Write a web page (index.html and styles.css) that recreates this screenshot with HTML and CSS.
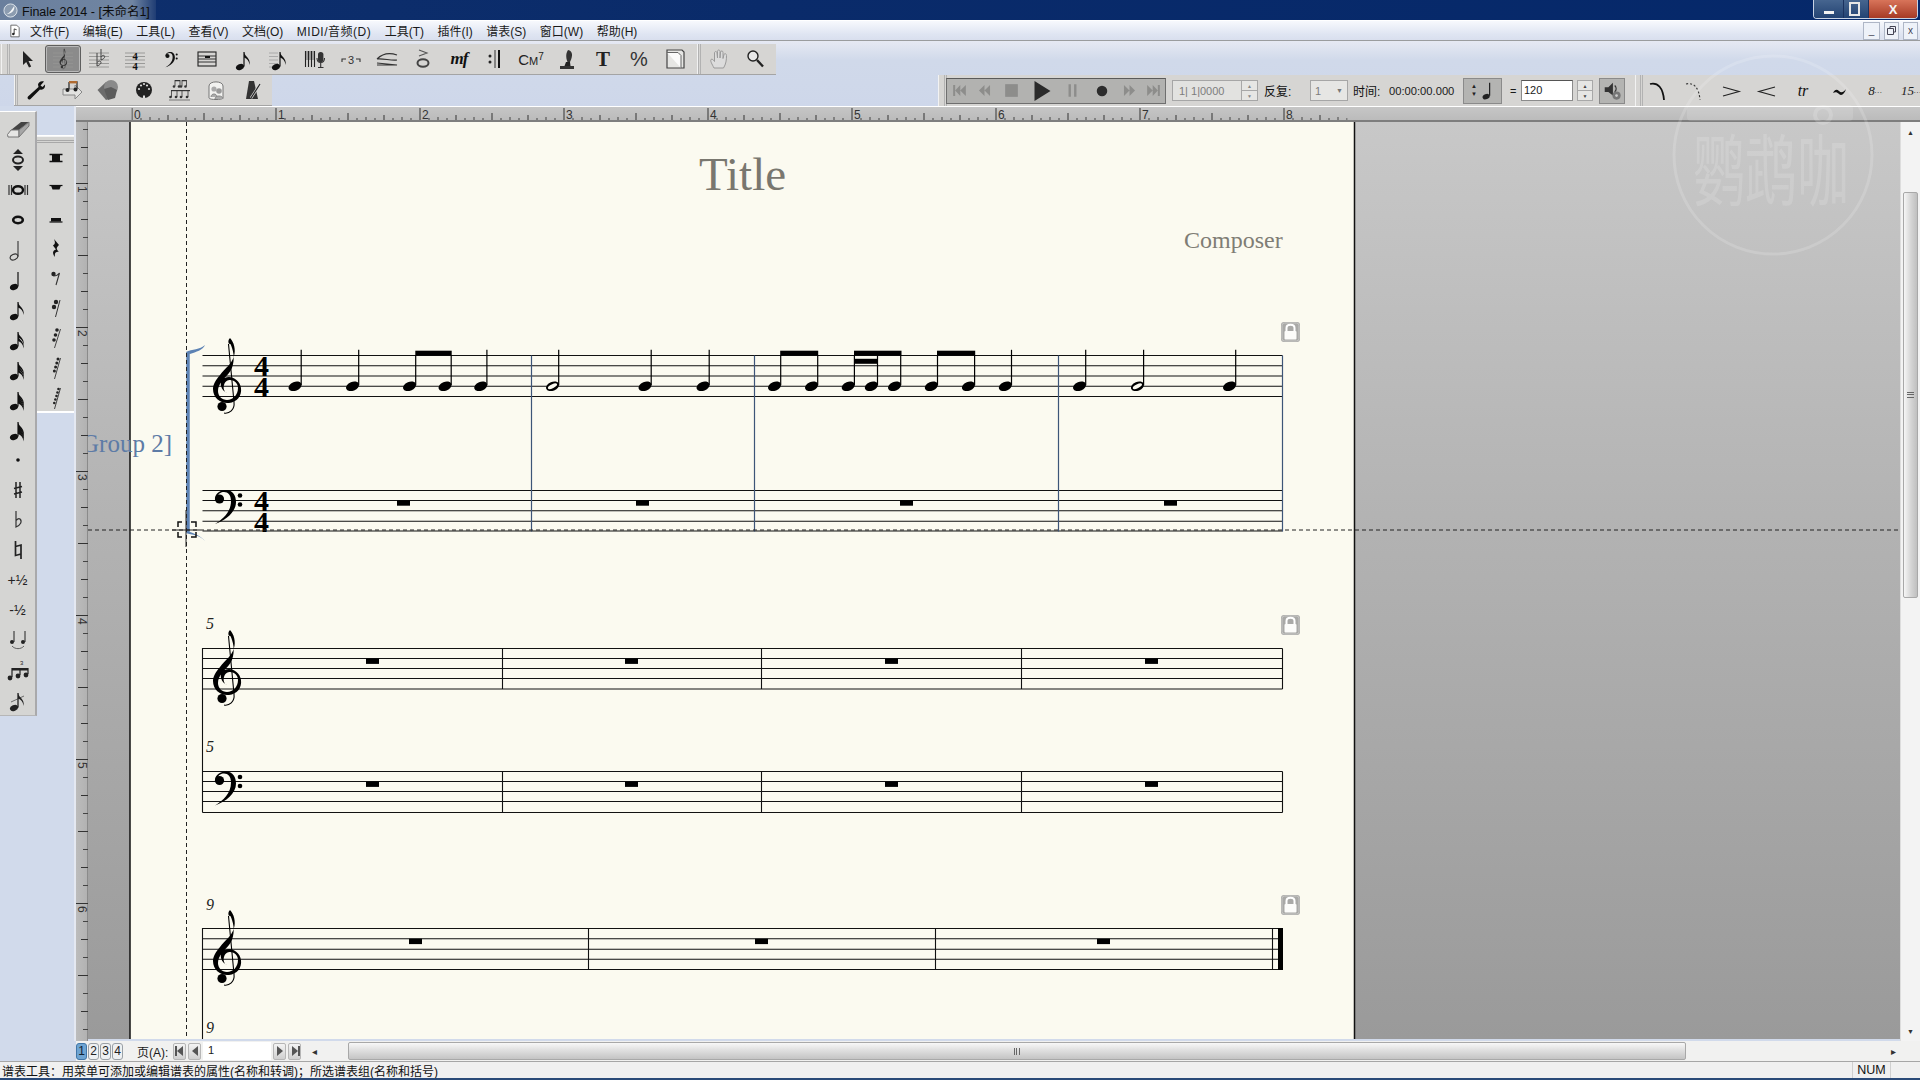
FILE: index.html
```html
<!DOCTYPE html>
<html lang="zh">
<head>
<meta charset="utf-8">
<title>Finale 2014</title>
<link rel="stylesheet" href="styles.css">
</head>
<body>
<svg class="sprite" aria-hidden="true">
<defs>
  <g id="treble">
    <path d="M17 0C21 4 23 12 21 18C19 26 12 30 7 37C3 42 0 46 0 51C0 60 8 66 16 65C24 64 29 58 28 50C27 43 21 39 16 39C10 39 7 44 8 48C9 52 12 54 14 55C11 54 10 50 11 47C12 43 15 42 17 42C22 42 25 46 25 50C25 57 20 62 14 62C9 62 5 58 5 53C5 46 11 41 16 35C21 29 22 18 19 10C18 6 17 5 16 6C15 4 15 2 17 0Z"/>
    <path d="M15.5 6L21 64C22 72 16 76 11 75" fill="none" stroke="#000" stroke-width="1.1"/>
    <circle cx="9" cy="68.5" r="4.6"/>
  </g>
  <g id="bass">
    <path d="M1 9C1 3 7 0 12 0C19 0 22 6 22 12C22 22 12 30 1 34C9 29 17 22 17 11C17 5 14 2 10 2C7 2 4 4 4 6Z"/>
    <circle cx="5.5" cy="9" r="4.6"/>
    <circle cx="26" cy="5.5" r="2.3"/>
    <circle cx="26" cy="14.5" r="2.3"/>
  </g>
  <g id="qn"><ellipse rx="6.8" ry="4.4" transform="rotate(-22)"/><path d="M6.2 -1V-36.5" stroke="#000" stroke-width="1.2"/></g>
  <g id="hn"><ellipse rx="6.8" ry="4.4" transform="rotate(-22)"/><ellipse rx="5" ry="1.9" transform="rotate(-26)" fill="#fbfaf0"/><path d="M6.2 -1V-36.5" stroke="#000" stroke-width="1.2"/></g>
  <g id="stem"><ellipse rx="6.8" ry="4.4" transform="rotate(-22)"/><path d="M6.2 -1V-31" stroke="#000" stroke-width="1.2"/></g>
  <rect id="rest" width="13" height="5.4"/>
  <g id="lock">
    <rect x="0" y="0" width="19" height="20" rx="3" fill="#a9a9a7"/>
    <rect x="1" y="1" width="17" height="18" rx="2.500" fill="none" stroke="#c8c8c6"/>
    <path d="M5.500 9V6C5.500 1.800 13.500 1.800 13.500 6V9" fill="none" stroke="#fff" stroke-width="2"/>
    <rect x="3.500" y="9" width="12" height="8.500" rx="1" fill="#fcfcfa"/>
  </g>

  <g id="n-head"><ellipse cx="8" cy="19" rx="4.2" ry="3" transform="rotate(-22 8 19)"/><path d="M12 18.500V4" stroke="#111" stroke-width="1.200"/></g>
  <path id="n-flag" d="M12 4C13 9 19 10 17.5 17C17 12.5 15 10.5 12 9.5Z"/>
  <g id="n-8"><use href="#n-head"/><use href="#n-flag"/></g>
  <g id="n-16"><use href="#n-head"/><use href="#n-flag"/><use href="#n-flag" y="3.5"/></g>
  <g id="n-32"><use href="#n-head"/><use href="#n-flag"/><use href="#n-flag" y="2.5"/><use href="#n-flag" y="5"/></g>
  <g id="n-64"><use href="#n-head"/><use href="#n-flag"/><use href="#n-flag" y="2"/><use href="#n-flag" y="4"/><use href="#n-flag" y="6"/></g>
  <g id="n-128"><use href="#n-head"/><use href="#n-flag"/><use href="#n-flag" y="1.6"/><use href="#n-flag" y="3.2"/><use href="#n-flag" y="4.8"/><use href="#n-flag" y="6.4"/></g>
  <g id="staffl"><path d="M2 6H22M2 9.5H22M2 13H22M2 16.5H22M2 20H22" stroke="#9a9a98" stroke-width="1" fill="none"/></g>

  <path id="i-arrow" d="M8 4V18L11.2 15L14 20.5L16.2 19.4L13.5 14H18Z" fill="#222"/>
  <g id="i-clefsel"><use href="#staffl" opacity=".6"/><g transform="translate(8.500 1.500) scale(.27)" fill="#333"><use href="#treble"/></g></g>
  <g id="i-key"><use href="#staffl"/><path d="M10 6V19C13 18 15 16 13.500 14.400C12.500 13.600 11 14.400 10 15.500M14 2V13C17 12 18.500 10 17.200 8.600C16.200 8 15 8.600 14 9.800" fill="none" stroke="#444" stroke-width="1"/></g>
  <g id="i-time"><use href="#staffl"/><text class="t-time" x="12" y="12.500">4</text><text class="t-time" x="12" y="22.500">4</text></g>
  <g id="i-bass"><g transform="translate(6 5) scale(.45)" fill="#111"><use href="#bass"/></g></g>
  <g id="i-measure"><rect x="3" y="5" width="18" height="14" fill="none" stroke="#222" stroke-width="1.100"/><path d="M3 9H21M3 12H21M3 15H21" stroke="#333"/><rect x="10" y="9" width="5" height="2" fill="#111"/></g>
  <g id="i-eighth"><use href="#n-8" transform="translate(1 1)" fill="#111"/></g>
  <g id="i-ghost"><path d="M2 6H11M2 9.500H11M2 13H11M2 16.500H11M2 20H11" stroke="#aaa" fill="none"/><use href="#n-8" transform="translate(1 1)" fill="#111"/></g>
  <g id="i-mic"><path d="M2.500 4V20M5.500 4V20M8.500 4V20M11.500 4V20" stroke="#222" stroke-width="1.100"/><path d="M4 4V13M7 4V13M10 4V13" stroke="#666" stroke-width="1"/><rect x="15" y="5" width="5.400" height="10" rx="2.600" fill="#333"/><path d="M14 11C14 17 21.500 17 21.500 11M17.700 16V20M15 20.500H20.500" fill="none" stroke="#333" stroke-width="1.100"/></g>
  <g id="i-tuplet"><path d="M3 15V12H7M17 12H21V15" fill="none" stroke="#333" stroke-width="1.100"/><text class="t-tup" x="12" y="16.500">3</text></g>
  <g id="i-hair"><path d="M2 12C8 6 16 6 22 8M2 12C8 11 16 14 22 13M2 18H22L2 16" fill="none" stroke="#333" stroke-width="1.100"/></g>
  <g id="i-accent"><path d="M8 3L16 6L8 9" fill="none" stroke="#555" stroke-width="1.100"/><ellipse cx="12" cy="16" rx="5.500" ry="3.700" fill="none" stroke="#444" stroke-width="2"/></g>
  <g id="i-repeat"><circle cx="7" cy="9" r="1.500" fill="#222"/><circle cx="7" cy="15" r="1.500" fill="#222"/><path d="M12 3V21" stroke="#333"/><path d="M16 3V21" stroke="#111" stroke-width="2"/></g>
  <g id="i-quill"><path d="M13 3C18 4 18 9 15 15L12.500 15C10.500 10 11 6 13 3Z" fill="#333"/><path d="M11 15H15L15.500 19H9.500Z" fill="#222"/><rect x="5" y="19" width="14" height="3" fill="#333"/></g>
  <g id="i-page"><path d="M4 3H19L21 5V21H4Z" fill="#e6e6e4" stroke="#444" stroke-width="1.200"/><path d="M4 5.500H15L18 8.500V21" fill="#fafafa" stroke="#666"/></g>
  <g id="i-hand"><path d="M7 21C5 17 3 14 4 12.500C5 11.500 6.500 13 7.500 14.500L7.500 6C7.500 4 10 4 10 6L10.500 11V4.500C10.500 2.500 13 2.500 13 4.500V11L13.500 5C14 3.500 16 3.500 16 5.500V11.500L17 7.500C17.500 6 19.500 6.500 19.500 8.500C19.500 13 19 17 16.500 21Z" fill="#dcdcdc" stroke="#9a9a9a"/></g>
  <g id="i-mag"><circle cx="10" cy="9" r="5" fill="#e8e8e8" stroke="#222" stroke-width="1.400"/><path d="M14 13L20 19.500" stroke="#222" stroke-width="2.400"/></g>

  <path id="i-wrench" d="M20 3.500C17 2.500 14.500 4 14 6.500L14.500 9L4 18.500C2.500 20.500 5 22.500 6.500 21L16 11.500C19 12.500 21.500 10 21 6.500L18.500 9L16.500 7.500Z" fill="#111"/>
  <g id="i-musarrow"><path d="M3 11H15V7L22 14L15 21V17H3Z" fill="#e2e2e0" stroke="#888"/><path d="M9 4H17V11M9 4V11" fill="none" stroke="#333" stroke-width="1.300"/><rect x="9" y="3" width="8" height="2.400" fill="#b06a30"/><circle cx="7.500" cy="12" r="2" fill="#222"/><circle cx="15.500" cy="11.500" r="2" fill="#222"/></g>
  <g id="i-shapes"><path d="M1.500 12L10 4L16 9V20L10 22Z" fill="#6c6c6c"/><circle cx="15" cy="9" r="7" fill="#8a8a8a"/><path d="M8 11L15 9L21 12L19 20L12 22Z" fill="#5c5c5c"/></g>
  <g id="i-midi"><circle cx="12" cy="12" r="8" fill="#222"/><circle cx="7" cy="11" r="1.100" fill="#ddd"/><circle cx="9" cy="7.500" r="1.100" fill="#ddd"/><circle cx="15" cy="7.500" r="1.100" fill="#ddd"/><circle cx="17" cy="11" r="1.100" fill="#ddd"/><circle cx="12" cy="6" r="1.100" fill="#ddd"/><rect x="11" y="17.500" width="2" height="2.500" fill="#ddd"/></g>
  <g id="i-notes" fill="#333"><path d="M7 2H12V3.200H7ZM14 2H18.500V3.200H14Z"/><path d="M7 2V8M12 2V8M14 2V8M18.500 2V8" stroke="#333" stroke-width=".8"/><circle cx="6" cy="8.500" r="1.300"/><circle cx="11" cy="8.500" r="1.300"/><circle cx="13" cy="8.500" r="1.300"/><circle cx="17.500" cy="8.500" r="1.300"/><path d="M3 12H22V13.200H3Z"/><path d="M3.500 12V19M9 12V19M14 12V19M20 12V19" stroke="#333" stroke-width=".8"/><circle cx="2.500" cy="19" r="1.300"/><circle cx="8" cy="19" r="1.300"/><circle cx="13" cy="19" r="1.300"/><circle cx="19" cy="19" r="1.300"/><path d="M1 22H22" stroke="#777"/></g>
  <g id="i-card"><path d="M5 20V8C5 2.500 19 2.500 19 8V20C19 22 5 22 5 20Z" fill="#f2f2f0" stroke="#777"/><circle cx="10" cy="11" r="2.600" fill="#aaa"/><circle cx="15" cy="13" r="2.800" fill="#999"/><path d="M7 19C7 15 13 15 13 19M11 21C11 17 19 17 19 21" fill="#aaa" stroke="#888"/></g>
  <g id="i-metro"><path d="M9 3H14L18 21H6Z" fill="#333"/><path d="M11 20L20 6" stroke="#ddd" stroke-width="2.500"/><path d="M11 20L20 6" stroke="#222" stroke-width="1.200"/></g>

  <path id="p-first" d="M4 5H6.500V19H4ZM13 5V19L6.500 12ZM20 5V19L13 12Z"/>
  <path id="p-rew" d="M12 5V19L5 12ZM19 5V19L12 12Z"/>
  <rect id="p-stop" x="4" y="4" width="16" height="16"/>
  <path id="p-play" d="M5 2L21 12L5 22Z"/>
  <path id="p-pause" d="M7 4H10V20H7ZM14 4H17V20H14Z"/>
  <circle id="p-rec" cx="12" cy="12" r="7"/>
  <path id="p-fwd" d="M5 5L12 12L5 19ZM12 5L19 12L12 19Z"/>
  <path id="p-last" d="M4 5L11 12L4 19ZM11 5L17.500 12L11 19ZM17.500 5H20V19H17.500Z"/>
  <g id="p-qnote"><ellipse cx="7" cy="19" rx="4.200" ry="3" transform="rotate(-22 7 19)" fill="#222"/><path d="M11 18V3" stroke="#222" stroke-width="1.400"/></g>
  <g id="p-speaker"><path d="M3 8H7L12 3V17L7 13H3Z" fill="#333"/><path d="M14 6C16 8 16 11 14 13" stroke="#333" fill="none" stroke-width="1.400"/><circle cx="16" cy="17" r="4.500" fill="#777"/><circle cx="16" cy="17" r="1.500" fill="#ccc"/></g>

  <path id="a-slur" d="M3 5C11 3 16 9 17 21" fill="none" stroke="#111" stroke-width="1.800"/>
  <path id="a-slurd" d="M3 5C11 3 16 9 17 21" fill="none" stroke="#333" stroke-width="1.100" stroke-dasharray="2 2"/>
  <path id="a-dim" d="M4 8L20 12.500L4 17" fill="none" stroke="#222" stroke-width="1.200"/>
  <path id="a-cres" d="M20 8L4 12.500L20 17" fill="none" stroke="#222" stroke-width="1.200"/>
  <path id="a-trill" d="M6 14C8 10 10 10 12 12C14 14 16 14 19 10C17.500 15 14.500 17.500 12 15C10 13 8 13 6 14Z" fill="#111"/>

  <g id="l-eraser"><path d="M5 12L15 4H23L13 12Z" fill="#444"/><path d="M5 12H13V19H2L1.500 16.500Z" fill="#e6e6e4" stroke="#777"/><path d="M13 12L23 4V8L13 19Z" fill="#a6a6a6" stroke="#777"/></g>
  <g id="l-updown"><path d="M12 1L17 6H7ZM12 23L7 18H17Z" fill="#222"/><ellipse cx="12" cy="12" rx="5" ry="3.400" fill="none" stroke="#222" stroke-width="2"/></g>
  <g id="l-brevis"><path d="M3 7V17M5.500 7V17M19 7V17M21.500 7V17" stroke="#333" stroke-width="1.200"/><ellipse cx="12" cy="12" rx="5" ry="3.800" fill="none" stroke="#111" stroke-width="2.400"/></g>
  <ellipse id="l-whole" cx="12" cy="12" rx="4.800" ry="3.200" fill="none" stroke="#111" stroke-width="2.600"/>
  <g id="l-half"><ellipse cx="8" cy="19" rx="4" ry="2.700" transform="rotate(-25 8 19)" fill="none" stroke="#333" stroke-width="1.100"/><path d="M12 18.500V3" stroke="#333" stroke-width="1.100"/></g>
  <g id="l-dot"><circle cx="12" cy="12" r="1.800"/></g>
  <path id="l-sharp" d="M10 4V20M14 4V20M8 10.500L16 8.500M8 16L16 14" fill="none" stroke="#222" stroke-width="1.500"/>
  <path id="l-flat" d="M10 3V19C14.500 17 16.500 13.500 14 11C13 10.200 11.500 10.800 10 12.500" fill="none" stroke="#333" stroke-width="1.200"/>
  <path id="l-natural" d="M9.500 3V17.500L15 16M15 21V7L9.500 8.500" fill="none" stroke="#222" stroke-width="1.700"/>
  <g id="l-tie" fill="#222"><circle cx="6" cy="14" r="2"/><circle cx="17" cy="14" r="2"/><path d="M8 14V3M19 14V3" stroke="#222" stroke-width="1"/><path d="M6 18C9 21.500 15 21.500 18 18" fill="none" stroke="#444" stroke-width=".8"/></g>
  <g id="l-tuplet" fill="#222"><path d="M6 10H22V12.500H6Z"/><path d="M6 10V19M14 10V17M22 10V16" stroke="#222" stroke-width="1.200"/><circle cx="4" cy="20" r="2.400"/><circle cx="12" cy="18" r="2.400"/><circle cx="20" cy="17" r="2.400"/><text class="t-mini" x="14" y="7">3</text></g>
  <g id="l-grace"><use href="#n-8" fill="#222" transform="translate(0 1)"/><path d="M5 14L18 8" stroke="#222" stroke-width=".6"/></g>

  <g id="r-double"><rect x="8" y="8" width="8" height="8" fill="#111"/><path d="M5.500 8.500H18.500M5.500 15.500H18.500" stroke="#111" stroke-width="1.300"/></g>
  <g id="r-whole"><path d="M5.500 9.500H18.500" stroke="#111" stroke-width="1.200"/><path d="M7 9.500H17L15.500 13.500H8.500Z" fill="#111"/></g>
  <g id="r-half"><path d="M5.500 16H18.500" stroke="#111" stroke-width="1.200"/><rect x="7" y="12" width="10" height="3.500" fill="#111"/></g>
  <path id="r-quarter" d="M10 3L15 9C12 12 12 13 15 16C13 15.500 10 16 11 21C8 18 8.500 14 12 13.500L9 9.500C11 8 11.500 7 10 3Z" fill="#111"/>
  <g id="r-8"><circle cx="9.500" cy="8" r="2.200" fill="#222"/><path d="M9.500 10C12 10 14 9 15.500 7L12 19" fill="none" stroke="#333" stroke-width="1.100"/></g>
  <g id="r-16"><circle cx="12" cy="6" r="2.200" fill="#222"/><circle cx="10" cy="11" r="2.200" fill="#222"/><path d="M16 4L11.500 21" stroke="#333"/></g>
  <g id="r-32" fill="#222"><circle cx="13" cy="4" r="1.800"/><circle cx="11.500" cy="9" r="1.800"/><circle cx="10" cy="14" r="1.800"/><path d="M16.500 3L10.500 22" stroke="#333" stroke-width=".9"/></g>
  <g id="r-64" fill="#222"><circle cx="14" cy="3" r="1.500"/><circle cx="12.800" cy="7" r="1.500"/><circle cx="11.600" cy="11" r="1.500"/><circle cx="10.400" cy="15" r="1.500"/><path d="M16.500 2L10.500 23" stroke="#333" stroke-width=".9"/></g>
  <g id="r-128" fill="#222"><circle cx="14.500" cy="3" r="1.300"/><circle cx="13.500" cy="6.500" r="1.300"/><circle cx="12.500" cy="10" r="1.300"/><circle cx="11.400" cy="13.500" r="1.300"/><circle cx="10.300" cy="17" r="1.300"/><path d="M16.500 2L10.500 23" stroke="#333" stroke-width=".9"/></g>
</defs>
</svg>

<header class="titlebar">
  <div class="title-glow">
    <svg class="app-logo" viewBox="0 0 16 16"><circle cx="8" cy="8" r="7" fill="#8c9cb0" stroke="#dfe5ec"/><path d="M3 12C6 12 9 8 12 3C13 8 9 12 3 12Z" fill="#f4f6f8"/></svg>
    <span class="title-text">Finale 2014 - [未命名1]</span>
  </div>
  <div class="winbtns">
    <span class="wb wb-min"></span>
    <span class="wb wb-max"></span>
    <span class="wb wb-close">X</span>
  </div>
</header>

<nav class="menubar">
  <svg class="doc-icon" viewBox="0 0 12 15"><path d="M1 .5H8L11 3.500V14.500H1Z" fill="#fff" stroke="#555"/><path d="M5 11V5L8 6" fill="none" stroke="#222"/><circle cx="4" cy="11" r="1.500" fill="#222"/></svg>
  <span>文件(F)</span><span>编辑(E)</span><span>工具(L)</span><span>查看(V)</span><span>文档(O)</span><span class="m-wide">MIDI/音频(D)</span><span>工具(T)</span><span>插件(I)</span><span>谱表(S)</span><span>窗口(W)</span><span>帮助(H)</span>
  <div class="mdibtns">
    <span class="mdi mdi-min">_</span>
    <span class="mdi"><svg class="mdi-ic" viewBox="0 0 9 9"><path d="M3 2.500V.5H8.500V6H6.500M.5 2.500H6.500V8.500H.5Z" fill="none" stroke="#445"/></svg></span>
    <span class="mdi">x</span>
  </div>
</nav>

<section class="toolzone">
  <div class="toolrow">
    <div class="tb tb-main">
      <i class="grip"></i>
      <span class="btn"><svg class="ic" viewBox="0 0 24 24"><use href="#i-arrow"/></svg></span>
      <span class="btn selected"><svg class="ic" viewBox="0 0 24 24"><use href="#i-clefsel"/></svg></span>
      <span class="btn"><svg class="ic" viewBox="0 0 24 24"><use href="#i-key"/></svg></span>
      <span class="btn"><svg class="ic" viewBox="0 0 24 24"><use href="#i-time"/></svg></span>
      <span class="btn"><svg class="ic" viewBox="0 0 24 24"><use href="#i-bass"/></svg></span>
      <span class="btn"><svg class="ic" viewBox="0 0 24 24"><use href="#i-measure"/></svg></span>
      <span class="btn"><svg class="ic" viewBox="0 0 24 24"><use href="#i-eighth"/></svg></span>
      <span class="btn"><svg class="ic" viewBox="0 0 24 24"><use href="#i-ghost"/></svg></span>
      <span class="btn"><svg class="ic" viewBox="0 0 24 24"><use href="#i-mic"/></svg></span>
      <span class="btn"><svg class="ic" viewBox="0 0 24 24"><use href="#i-tuplet"/></svg></span>
      <span class="btn"><svg class="ic" viewBox="0 0 24 24"><use href="#i-hair"/></svg></span>
      <span class="btn"><svg class="ic" viewBox="0 0 24 24"><use href="#i-accent"/></svg></span>
      <span class="btn tx-mf">mf</span>
      <span class="btn"><svg class="ic" viewBox="0 0 24 24"><use href="#i-repeat"/></svg></span>
      <span class="btn tx-chord">C<small>M</small><sup>7</sup></span>
      <span class="btn"><svg class="ic" viewBox="0 0 24 24"><use href="#i-quill"/></svg></span>
      <span class="btn tx-t">T</span>
      <span class="btn tx-pct">%</span>
      <span class="btn"><svg class="ic" viewBox="0 0 24 24"><use href="#i-page"/></svg></span>
    </div>
    <div class="tb tb-nav">
      <i class="grip"></i>
      <span class="btn"><svg class="ic" viewBox="0 0 24 24"><use href="#i-hand"/></svg></span>
      <span class="btn"><svg class="ic" viewBox="0 0 24 24"><use href="#i-mag"/></svg></span>
    </div>
  </div>
  <div class="toolrow toolrow-2">
    <div class="tb tb-aux">
      <i class="grip"></i>
      <span class="btn"><svg class="ic" viewBox="0 0 24 24"><use href="#i-wrench"/></svg></span>
      <span class="btn"><svg class="ic" viewBox="0 0 24 24"><use href="#i-musarrow"/></svg></span>
      <span class="btn"><svg class="ic" viewBox="0 0 24 24"><use href="#i-shapes"/></svg></span>
      <span class="btn"><svg class="ic" viewBox="0 0 24 24"><use href="#i-midi"/></svg></span>
      <span class="btn"><svg class="ic" viewBox="0 0 24 24"><use href="#i-notes"/></svg></span>
      <span class="btn"><svg class="ic" viewBox="0 0 24 24"><use href="#i-card"/></svg></span>
      <span class="btn"><svg class="ic" viewBox="0 0 24 24"><use href="#i-metro"/></svg></span>
    </div>
    <div class="tb tb-play">
      <i class="grip"></i>
      <div class="transport">
        <svg class="pi" viewBox="0 0 24 24"><use href="#p-first"/></svg>
        <svg class="pi" viewBox="0 0 24 24"><use href="#p-rew"/></svg>
        <svg class="pi" viewBox="0 0 24 24"><use href="#p-stop"/></svg>
        <svg class="pi pi-play" viewBox="0 0 24 24"><use href="#p-play"/></svg>
        <svg class="pi" viewBox="0 0 24 24"><use href="#p-pause"/></svg>
        <svg class="pi pi-rec" viewBox="0 0 24 24"><use href="#p-rec"/></svg>
        <svg class="pi" viewBox="0 0 24 24"><use href="#p-fwd"/></svg>
        <svg class="pi" viewBox="0 0 24 24"><use href="#p-last"/></svg>
      </div>
      <div class="field field-pos"><span>1| 1|0000</span><span class="spin"><b>▲</b><b>▼</b></span></div>
      <span class="lbl lbl-repeat">反复:</span>
      <div class="field field-combo"><span>1</span><em>▼</em></div>
      <span class="lbl lbl-time">时间:</span>
      <span class="timecode">00:00:00.000</span>
      <div class="gbtn gbtn-note"><span class="updn"><b>▲</b><b>▼</b></span><svg class="pi-note" viewBox="0 0 16 24"><use href="#p-qnote"/></svg></div>
      <span class="eq">=</span>
      <div class="input-tempo">120</div>
      <span class="spin spin-tempo"><b>▲</b><b>▼</b></span>
      <div class="gbtn gbtn-spk"><svg class="pi-spk" viewBox="0 0 22 24"><use href="#p-speaker"/></svg></div>
      <i class="grip grip-mid"></i>
      <span class="btn"><svg class="ic" viewBox="0 0 24 24"><use href="#a-slur"/></svg></span>
      <span class="btn"><svg class="ic" viewBox="0 0 24 24"><use href="#a-slurd"/></svg></span>
      <span class="btn"><svg class="ic" viewBox="0 0 24 24"><use href="#a-dim"/></svg></span>
      <span class="btn"><svg class="ic" viewBox="0 0 24 24"><use href="#a-cres"/></svg></span>
      <span class="btn tx-tr">tr</span>
      <span class="btn"><svg class="ic" viewBox="0 0 24 24"><use href="#a-trill"/></svg></span>
      <span class="btn tx-oct">8<sup>…</sup></span>
      <span class="btn tx-oct">15<sup>…</sup></span>
    </div>
  </div>
</section>

<main class="workspace">
  <aside class="dock">
    <div class="palette palette-a">
      <span class="pbtn"><svg class="ic" viewBox="0 0 24 24"><use href="#l-eraser"/></svg></span>
      <span class="pbtn"><svg class="ic" viewBox="0 0 24 24"><use href="#l-updown"/></svg></span>
      <span class="pbtn"><svg class="ic" viewBox="0 0 24 24"><use href="#l-brevis"/></svg></span>
      <span class="pbtn"><svg class="ic" viewBox="0 0 24 24"><use href="#l-whole"/></svg></span>
      <span class="pbtn"><svg class="ic" viewBox="0 0 24 24"><use href="#l-half"/></svg></span>
      <span class="pbtn"><svg class="ic" viewBox="0 0 24 24"><use href="#n-head"/></svg></span>
      <span class="pbtn"><svg class="ic" viewBox="0 0 24 24"><use href="#n-8"/></svg></span>
      <span class="pbtn"><svg class="ic" viewBox="0 0 24 24"><use href="#n-16"/></svg></span>
      <span class="pbtn"><svg class="ic" viewBox="0 0 24 24"><use href="#n-32"/></svg></span>
      <span class="pbtn"><svg class="ic" viewBox="0 0 24 24"><use href="#n-64"/></svg></span>
      <span class="pbtn"><svg class="ic" viewBox="0 0 24 24"><use href="#n-128"/></svg></span>
      <span class="pbtn"><svg class="ic" viewBox="0 0 24 24"><use href="#l-dot"/></svg></span>
      <span class="pbtn"><svg class="ic" viewBox="0 0 24 24"><use href="#l-sharp"/></svg></span>
      <span class="pbtn"><svg class="ic" viewBox="0 0 24 24"><use href="#l-flat"/></svg></span>
      <span class="pbtn"><svg class="ic" viewBox="0 0 24 24"><use href="#l-natural"/></svg></span>
      <span class="pbtn tx-half">+½</span>
      <span class="pbtn tx-half">-½</span>
      <span class="pbtn"><svg class="ic" viewBox="0 0 24 24"><use href="#l-tie"/></svg></span>
      <span class="pbtn"><svg class="ic" viewBox="0 0 24 24"><use href="#l-tuplet"/></svg></span>
      <span class="pbtn"><svg class="ic" viewBox="0 0 24 24"><use href="#l-grace"/></svg></span>
    </div>
    <div class="palette palette-b">
      <i class="vgrip"></i>
      <span class="pbtn"><svg class="ic" viewBox="0 0 24 24"><use href="#r-double"/></svg></span>
      <span class="pbtn"><svg class="ic" viewBox="0 0 24 24"><use href="#r-whole"/></svg></span>
      <span class="pbtn"><svg class="ic" viewBox="0 0 24 24"><use href="#r-half"/></svg></span>
      <span class="pbtn"><svg class="ic" viewBox="0 0 24 24"><use href="#r-quarter"/></svg></span>
      <span class="pbtn"><svg class="ic" viewBox="0 0 24 24"><use href="#r-8"/></svg></span>
      <span class="pbtn"><svg class="ic" viewBox="0 0 24 24"><use href="#r-16"/></svg></span>
      <span class="pbtn"><svg class="ic" viewBox="0 0 24 24"><use href="#r-32"/></svg></span>
      <span class="pbtn"><svg class="ic" viewBox="0 0 24 24"><use href="#r-64"/></svg></span>
      <span class="pbtn"><svg class="ic" viewBox="0 0 24 24"><use href="#r-128"/></svg></span>
    </div>
  </aside>

  <div class="editor">
    <svg class="ruler-h" viewBox="76 106 1844 16">
      <defs>
        <pattern id="rh" x="131.500" y="106" width="144" height="16" patternUnits="userSpaceOnUse">
          <path d="M.5 2V14" stroke="#333"/>
          <path d="M72.500 7V14" stroke="#333"/>
          <path d="M36.500 9V14M108.500 9V14" stroke="#333"/>
          <path d="M9.500 12V14M18.500 11V14M27.500 12V14M45.500 12V14M54.500 11V14M63.500 12V14M81.500 12V14M90.500 11V14M99.500 12V14M117.500 12V14M126.500 11V14M135.500 12V14" stroke="#444"/>
        </pattern>
      </defs>
      <rect x="131.500" y="106" width="1216" height="16" fill="url(#rh)"/>
      <g class="r-lab">
        <text x="134" y="119">0</text><text x="278" y="119">1</text><text x="422" y="119">2</text><text x="566" y="119">3</text><text x="710" y="119">4</text><text x="854" y="119">5</text><text x="998" y="119">6</text><text x="1142" y="119">7</text><text x="1286" y="119">8</text>
      </g>
    </svg>
    <div class="editor-body">
      <svg class="ruler-v" viewBox="76 122 12 919">
        <defs>
          <pattern id="rv" x="76" y="39" width="12" height="144" patternUnits="userSpaceOnUse">
            <path d="M0 .5H12" stroke="#333"/>
            <path d="M2 72.500H12M5 36.500H12M5 108.500H12" stroke="#333"/>
            <path d="M7 18.500H12M7 54.500H12M7 90.500H12M7 126.500H12" stroke="#444"/>
          </pattern>
        </defs>
        <rect x="76" y="122" width="12" height="919" fill="url(#rv)"/>
        <g class="r-lab">
          <text transform="translate(78 186) rotate(90)">1</text>
          <text transform="translate(78 330) rotate(90)">2</text>
          <text transform="translate(78 474) rotate(90)">3</text>
          <text transform="translate(78 618) rotate(90)">4</text>
          <text transform="translate(78 762) rotate(90)">5</text>
          <text transform="translate(78 906) rotate(90)">6</text>
        </g>
      </svg>
      <svg class="score" viewBox="88 122 1812 917">
        <rect class="page" x="130" y="122" width="1224" height="917"/>
        <path class="page-edge" d="M130 122V1039M1354.500 122V1039"/>
        <text class="t-title" x="699" y="190">Title</text>
        <text class="t-composer" x="1184" y="248">Composer</text>
        <text class="t-group" x="172" y="452" text-anchor="end">[Group 2]</text>

        <!-- system 1 -->
        <path class="bracket" d="M188 352V533"/>
        <path class="bracket-hook" d="M186 352C192 349 200 350 205 345C203 350 196 352 190 354ZM186 533C192 535 200 535 205 541C202 537 196 534 190 532Z"/>
        <g class="staff">
          <path d="M202.500 355.500H1282.500M202.500 365.800H1282.500M202.500 376H1282.500M202.500 386.300H1282.500M202.500 396.500H1282.500"/>
          <path d="M202.500 490.500H1282.500M202.500 500.500H1282.500M202.500 510.800H1282.500M202.500 521.300H1282.500M202.500 531H1282.500"/>
        </g>
        <path class="bar-blue" d="M531.500 355.500V531.500M754.500 355.500V531.500M1058.500 355.500V531.500M1282.500 355.500V531.500"/>
        <use href="#treble" x="213" y="338"/>
        <use href="#bass" x="214" y="490"/>
        <text class="t-meter" x="261.500" y="375.500">4</text><text class="t-meter" x="261.500" y="396.500">4</text>
        <text class="t-meter" x="261.500" y="510.500">4</text><text class="t-meter" x="261.500" y="531.500">4</text>
        <use href="#qn" x="295" y="386.300"/><use href="#qn" x="352.500" y="386.300"/>
        <use href="#stem" x="409.500" y="386.300"/><use href="#stem" x="445" y="386.300"/>
        <rect x="415.300" y="350.700" width="36.400" height="4.800"/>
        <use href="#qn" x="480.700" y="386.300"/>
        <use href="#hn" x="552.500" y="386.300"/><use href="#qn" x="645" y="386.300"/><use href="#qn" x="703" y="386.300"/>
        <use href="#stem" x="774.500" y="386.300"/><use href="#stem" x="811.500" y="386.300"/>
        <rect x="780.200" y="350.700" width="38" height="4.800"/>
        <use href="#stem" x="848.200" y="386.300"/><use href="#stem" x="871.300" y="386.300"/><use href="#stem" x="894.500" y="386.300"/>
        <rect x="854" y="350.700" width="47.500" height="4.800"/><rect x="854" y="358.800" width="24" height="5"/>
        <use href="#stem" x="931.300" y="386.300"/><use href="#stem" x="968.400" y="386.300"/>
        <rect x="937" y="350.700" width="38.200" height="4.800"/>
        <use href="#qn" x="1005.300" y="386.300"/><use href="#qn" x="1079.500" y="386.300"/><use href="#hn" x="1137.400" y="386.300"/><use href="#qn" x="1229.500" y="386.300"/>
        <use href="#rest" x="397" y="500.300"/><use href="#rest" x="636" y="500.300"/><use href="#rest" x="900" y="500.300"/><use href="#rest" x="1164" y="500.300"/>
        <g transform="translate(1281 322)"><use href="#lock"/></g>

        <!-- system 2 -->
        <text class="t-num" x="206" y="629">5</text><text class="t-num" x="206" y="752">5</text>
        <g class="staff">
          <path d="M202.500 648.500H1282.500M202.500 658.500H1282.500M202.500 668.500H1282.500M202.500 678.500H1282.500M202.500 689H1282.500"/>
          <path d="M202.500 771.500H1282.500M202.500 781.500H1282.500M202.500 791.500H1282.500M202.500 801.500H1282.500M202.500 812.500H1282.500"/>
          <path d="M202.500 648V812.500M502.500 648.500V689M761.500 648.500V689M1021.500 648.500V689M1282.500 648.500V689M502.500 771.500V812.500M761.500 771.500V812.500M1021.500 771.500V812.500M1282.500 771.500V812.500"/>
        </g>
        <use href="#treble" x="213" y="630"/><use href="#bass" x="214" y="771.500"/>
        <use href="#rest" x="366" y="658.500"/><use href="#rest" x="625" y="658.500"/><use href="#rest" x="885" y="658.500"/><use href="#rest" x="1145" y="658.500"/>
        <use href="#rest" x="366" y="781.500"/><use href="#rest" x="625" y="781.500"/><use href="#rest" x="885" y="781.500"/><use href="#rest" x="1145" y="781.500"/>
        <g transform="translate(1281 615)"><use href="#lock"/></g>

        <!-- system 3 -->
        <text class="t-num" x="206" y="910">9</text><text class="t-num" x="206" y="1033">9</text>
        <g class="staff">
          <path d="M202.500 928.500H1280M202.500 938.700H1280M202.500 949.300H1280M202.500 959.300H1280M202.500 969.500H1280"/>
          <path d="M202.500 928V1040M588.500 928.500V969.500M935.500 928.500V969.500M1272.500 928.500V969.500"/>
        </g>
        <rect x="1278" y="928" width="5" height="42"/>
        <use href="#treble" x="213" y="910"/>
        <use href="#rest" x="409" y="938.700"/><use href="#rest" x="755" y="938.700"/><use href="#rest" x="1097" y="938.700"/>
        <g transform="translate(1281 895)"><use href="#lock"/></g>

        <path class="guide" d="M186.500 122V1039"/>
        <path class="guide" d="M88 530H1900"/>
        <path class="cursor" d="M178 527V522H182M191 522H196V527M178 532V537H182M191 537H196V532"/>
        <path class="cursor-thin" d="M186 510V547M172 530H200"/>
      </svg>
      <div class="vscroll">
        <span class="sarrow">▲</span>
        <div class="vthumb"><i></i></div>
        <span class="sarrow sarrow-end">▼</span>
      </div>
    </div>
  </div>
</main>

<div class="pagebar">
  <div class="tabs"><span class="tab tab-on">1</span><span class="tab">2</span><span class="tab">3</span><span class="tab">4</span></div>
  <span class="pagelbl">页(A):</span>
  <span class="navbtn"><b class="nb-first"></b></span><span class="navbtn"><b class="nb-prev"></b></span>
  <span class="pageinput">1</span>
  <span class="navbtn"><b class="nb-next"></b></span><span class="navbtn"><b class="nb-last"></b></span>
  <span class="hs-arrow">◂</span>
  <div class="hthumb"><i></i></div>
  <div class="hs-track"><span class="hs-arrow">▸</span></div>
</div>

<footer class="statusbar">
  <span class="status-msg">谱表工具：用菜单可添加或编辑谱表的属性(名称和转调)；所选谱表组(名称和括号)</span>
  <span class="status-num">NUM</span>
</footer>
<div class="taskline"></div>

<svg class="watermark" viewBox="0 0 204 204" aria-hidden="true">
  <circle cx="102" cy="102" r="99"/>
  <rect class="wm-band" x="16" y="52" width="166" height="16" rx="4"/>
  <circle class="wm-ring" cx="152" cy="62" r="8"/>
  <text class="wm-text" transform="translate(22 147) scale(1 1.500)">鹦鹉咖</text>
</svg>
</body>
</html>
```

FILE: styles.css
```css
* { box-sizing: border-box; }
html, body { margin: 0; padding: 0; }
body {
  width: 1920px;
  height: 1080px;
  overflow: hidden;
  position: relative;
  display: flex;
  flex-direction: column;
  background: #d1daeb;
  font-family: "Liberation Sans", "Noto Sans CJK SC", sans-serif;
  font-size: 12px;
  color: #1a1a1a;
}
.sprite { position: absolute; width: 0; height: 0; }
svg { display: block; }
text { font-family: "Liberation Serif", serif; }

/* title bar */
.titlebar {
  height: 20px;
  flex: none;
  display: flex;
  justify-content: space-between;
  background: linear-gradient(90deg, #0e2f6c 0, #0a2b6a 40%, #05286a 100%);
}
.title-glow {
  width: 156px;
  display: flex;
  align-items: center;
  gap: 4px;
  padding-left: 3px;
  background: linear-gradient(90deg, #6a7f9d, #7085a2 85%, #1f3d74);
}
.app-logo { width: 15px; height: 15px; }
.title-text { font-size: 12.500px; color: #0d0d0d; white-space: nowrap; }
.winbtns { display: flex; height: 19px; width: 105px; margin-right: 2px; border: 1px solid #c7d2e4; border-top: 0; border-radius: 0 0 4px 4px; overflow: hidden; }
.wb { display: flex; align-items: center; justify-content: center; position: relative; }
.wb-min { width: 29px; background: linear-gradient(#46658f, #234373); }
.wb-min::after { content: ""; width: 10px; height: 3px; margin-top: 6px; background: #f2f2f2; }
.wb-max { width: 25px; background: linear-gradient(#46658f, #234373); border-left: 1px solid #1c3360; }
.wb-max::after { content: ""; width: 7px; height: 10px; border: 2px solid #e6e6e6; margin-right: 4px; }
.wb-close { flex: 1; background: linear-gradient(#d8745a, #a63a25); color: #f4f4f4; font-weight: bold; font-size: 13px; border-left: 1px solid #1c3360; }

/* menu */
.menubar {
  height: 21px;
  flex: none;
  display: flex;
  align-items: center;
  gap: 13.500px;
  padding-left: 10px;
  background: linear-gradient(#f7f9fd, #dfe5f2 70%, #d9dfee);
  border-top: 1px solid #fff;
  border-bottom: 1px solid #9a9c9e;
  font-size: 12px;
  white-space: nowrap;
}
.doc-icon { width: 10px; height: 14px; margin-right: -3.500px; }
.m-wide { letter-spacing: .5px; }
.mdibtns { margin-left: auto; display: flex; gap: 4px; margin-right: 2px; height: 18px; }
.mdi { width: 15px; display: flex; align-items: center; justify-content: center; background: #eef2f9; border: 1px solid #aeb6c6; color: #445; font-size: 10px; }
.mdi-min { width: 17px; }
.mdi-ic { width: 9px; height: 9px; }

/* toolbars */
.toolzone {
  height: 65px;
  flex: none;
  display: flex;
  flex-direction: column;
  background: linear-gradient(#e6e9f3, #d0d9ea 30%, #ced7ea);
  overflow: hidden;
}
.toolrow { display: flex; height: 31px; margin-top: 3px; flex: none; }
.toolrow-2 { justify-content: space-between; height: 31px; margin-top: 0; }
.tb { display: flex; align-items: stretch; background: #d6d5d3; border-bottom: 1px solid #a4a4a4; flex: none; }
.tb-main { width: 697px; padding-right: 4px; }
.tb-nav { width: 79px; margin-left: 0; }
.tb-aux { width: 258px; margin-left: 14px; }
.tb-play { width: 982px; align-items: center; overflow: hidden; border-bottom: 0; }
.grip { width: 9px; flex: none; align-self: stretch; border-left: 1px solid #f2f2f2; border-right: 3px double #b2b2b2; margin-left: 1px; margin-right: -1px; }
.tb-aux .grip { width: 4px; margin: 0; border-right-width: 3px; }
.tb-nav .grip { width: 4px; margin: 0; }
.btn { width: 36px; height: 100%; flex: none; display: flex; align-items: center; justify-content: center; }
.ic { width: 24px; height: 24px; fill: #111; }
.selected { background: #8b8b8b; border: 1px solid #5f5f5f; box-shadow: inset 0 0 0 1px #b9b9b9; border-radius: 3px; height: 28px; align-self: center; }
.tx-mf { font: italic bold 17px "Liberation Serif", serif; letter-spacing: -1px; color: #111; }
.tx-chord { font-size: 15px; font-family: "Liberation Sans", sans-serif; color: #222; align-items: center; }
.tx-chord small { font-size: 11px; margin-top: 3px; }
.tx-chord sup { font-size: 10px; margin-top: -6px; vertical-align: baseline; }
.tx-t { font: bold 21px "Liberation Serif", serif; color: #222; }
.tx-pct { font-size: 20px; color: #333; }
.tx-tr { font: italic 16px "Liberation Serif", serif; color: #111; }
.tx-oct { font: italic 13px "Liberation Serif", serif; color: #222; }
.tx-oct sup { font-size: 8px; line-height: 0; }
.t-time { font: bold 10.500px "Liberation Serif", serif; text-anchor: middle; fill: #111; }
.t-tup { font: 11px "Liberation Sans", sans-serif; text-anchor: middle; fill: #333; }
.t-mini { font: 6px "Liberation Sans", sans-serif; fill: #222; }

/* playback row */
.tb-play > .grip:first-child { margin-left: 0; height: 31px; }
.transport {
  width: 220px;
  height: 26px;
  flex: none;
  display: grid;
  grid-template-columns: 24.5px 25px 29px 31px 31px 29px 26px 1fr;
  align-items: center;
  justify-items: center;
  background: #b2b2b0;
  border: 1px solid #6f6f6f;
  border-top-color: #5a5a5a;
}
.pi { width: 19px; height: 19px; fill: #8d8d8b; }
.pi-play { fill: #2a2a2a; width: 25px; height: 24px; }
.pi-rec { fill: #2c2c2c; width: 18px; height: 18px; }
.field { display: flex; align-items: center; flex: none; background: #e2e2e0; border: 1px solid #a6a6a6; color: #7d7d7d; height: 21px; }
.field-pos { width: 86px; margin-left: 6px; justify-content: space-between; padding-left: 6px; font-size: 11px; }
.spin { display: flex; flex-direction: column; width: 16px; height: 100%; flex: none; background: #e6e6e4; border-left: 1px solid #a8a8a8; font-size: 0; }
.spin b { flex: 1; display: flex; align-items: center; justify-content: center; font-size: 5px; color: #888; font-weight: normal; }
.spin b + b { border-top: 1px solid #a8a8a8; }
.lbl { flex: none; font-size: 12px; color: #111; white-space: nowrap; }
.lbl-repeat { width: 46px; margin-left: 6px; }
.field-combo { width: 38px; padding: 0 4px; justify-content: space-between; font-size: 11px; background: #e6e6e4; }
.field-combo em { font-style: normal; font-size: 7px; color: #777; }
.lbl-time { width: 36px; margin-left: 5px; }
.timecode { width: 68px; flex: none; font-size: 11.200px; white-space: nowrap; }
.gbtn { flex: none; height: 26px; display: flex; align-items: center; justify-content: center; background: #b4b4b2; border: 1px solid #8a8a8a; }
.gbtn-note { width: 39px; margin-left: 6px; gap: 3px; }
.updn { display: flex; flex-direction: column; gap: 1px; font-size: 0; }
.updn b { font-size: 6px; font-weight: normal; line-height: 7px; color: #222; }
.pi-note { width: 14px; height: 21px; }
.eq { width: 11px; margin-left: 8px; flex: none; font-size: 11px; }
.input-tempo { width: 52px; height: 21px; flex: none; margin-left: 0; margin-right: 3px; background: #fff; border: 1px solid #8b8b8b; border-top-color: #555; font-size: 11px; padding: 3px 2px; color: #222; }
.spin-tempo { height: 21px; margin-left: 1px; border: 1px solid #a8a8a8; }
.spin-tempo b { color: #444; }
.gbtn-spk { width: 26px; margin-left: 6px; }
.pi-spk { width: 20px; height: 22px; }
.grip-mid { height: 31px; width: 8px; margin-left: 10px; margin-right: -2px; }

/* workspace */
.workspace { height: 935px; flex: none; display: flex; }
.dock { width: 76px; flex: none; display: flex; align-items: flex-start; background: #d1daeb; border-right: 2px solid #e4e8f1; }
.palette { width: 37px; flex: none; background: #d5d5d3; display: flex; flex-direction: column; }
.palette-a { margin-top: 5px; padding-top: 3px; height: 605px; border-top: 1px solid #fff; border-right: 2px solid #a9a9ab; border-bottom: 1px solid #b6b6b6; }
.palette-b { margin-top: 29px; height: 278px; border-top: 1px solid #fff; border-bottom: 2px solid #fff; }
.vgrip { height: 7px; flex: none; border-top: 1px solid #f4f4f4; border-bottom: 3px double #a8a8a8; }
.pbtn { height: 30px; flex: none; display: flex; align-items: center; justify-content: center; }
.tx-half { font-size: 14px; color: #222; font-family: "Liberation Sans", sans-serif; }

.editor { flex: 1; display: flex; flex-direction: column; min-width: 0; }
.ruler-h {
  width: 1844px;
  height: 16px;
  flex: none;
  background: linear-gradient(#fff 0, #fff 1px, #c6c6c6 1px, #bbb 14px, #7e7e7e 14px, #7e7e7e 16px);
}
.r-lab text { font: 12px "Liberation Sans", sans-serif; fill: #333; }
.editor-body { flex: 1; display: flex; min-height: 0; }
.ruler-v {
  width: 12px;
  height: 919px;
  flex: none;
  background: linear-gradient(90deg, #bcbcbc, #b2b2b2 90%, #6e6e6e);
}
.score {
  width: 1812px;
  height: 917px;
  flex: none;
  background: linear-gradient(#c8c8c8, #b2b2b2 45%, #9a9a9a);
}
.page { fill: #fbfaf0; }
.page-edge { stroke: #111; stroke-width: 1.500; fill: none; }
.t-title { font-size: 47px; fill: #79776f; }
.t-composer { font-size: 24px; fill: #7f7d75; }
.t-group { font-size: 25px; fill: #5d7ba6; }
.t-num { font: italic 16px "Liberation Serif", serif; fill: #222; }
.t-meter { font: bold 30px "Liberation Serif", serif; text-anchor: middle; fill: #000; }
.staff path { stroke: #111; stroke-width: 1.100; fill: none; }
.bar-blue { stroke: #3d5578; stroke-width: 1.200; fill: none; }
.bracket { stroke: #5c82b4; stroke-width: 3.500; fill: none; }
.bracket-hook { fill: #5c82b4; }
.guide { stroke: #222; stroke-width: 1; stroke-dasharray: 4 3; fill: none; }
.cursor { stroke: #111; stroke-width: 1.500; fill: none; }
.cursor-thin { stroke: #222; stroke-width: 1; fill: none; }

/* vertical scroller */
.vscroll { width: 20px; flex: none; height: 919px; display: flex; flex-direction: column; align-items: center; background: #f3f3f3; border-left: 1px solid #ddd; }
.sarrow { height: 20px; flex: none; display: flex; align-items: center; justify-content: center; font-size: 7px; color: #333; }
.sarrow-end { margin-top: auto; }
.vthumb { width: 15px; height: 406px; margin-top: 50px; display: flex; align-items: center; justify-content: center; background: linear-gradient(90deg, #f6f6f6, #d4d4d4 55%, #bfbfbf); border: 1px solid #a8a8a8; border-radius: 2px; }
.vthumb i { width: 7px; height: 6px; border-top: 3px double #666; border-bottom: 1px solid #666; }

/* page bar */
.pagebar { height: 20px; flex: none; display: flex; align-items: center; padding-left: 76px; background: #f1f1f0; box-shadow: inset 76px 0 0 #d1daeb; }
.tabs { display: flex; gap: 1px; flex: none; }
.tab { width: 11px; height: 17px; display: flex; align-items: center; justify-content: center; font-size: 12px; background: #eef0f2; border: 1px solid #9aa0a6; border-radius: 3px; color: #222; }
.tab-on { background: #6ea4d2; border-color: #4076a8; color: #123; }
.pagelbl { margin-left: 14px; width: 36px; flex: none; font-size: 12px; white-space: nowrap; }
.navbtn { width: 13px; height: 17px; margin-right: 2px; flex: none; background: linear-gradient(#f4f4f4, #cfcfcf); border: 1px solid #b6b6b6; border-radius: 2px; display: flex; align-items: center; justify-content: center; }
.navbtn b { display: block; width: 0; height: 0; border-style: solid; }
.nb-first, .nb-prev { border-width: 5px 6px 5px 0; border-color: transparent #555 transparent transparent; }
.nb-first { box-shadow: -2px 0 0 #555; }
.nb-next, .nb-last { border-width: 5px 0 5px 6px; border-color: transparent transparent transparent #555; }
.nb-last { box-shadow: 2px 0 0 #555; }
.pageinput { width: 68px; height: 18px; flex: none; margin-right: 2px; background: #fff; padding: 2px 5px; font-size: 11px; }
.hs-arrow { font-size: 10px; color: #333; width: 14px; flex: none; text-align: center; margin-left: 4px; margin-right: 27px; }
.hthumb { width: 1338px; height: 18px; flex: none; display: flex; align-items: center; justify-content: center; background: linear-gradient(#f8f8f8, #e2e2e2 40%, #c4c4c4); border: 1px solid #a8a8a8; border-radius: 2px; }
.hthumb i { width: 6px; height: 7px; border-left: 3px double #666; border-right: 1px solid #666; }
.hs-track { flex: 1; height: 100%; display: flex; align-items: center; justify-content: flex-end; padding-right: 24px; }
.hs-track .hs-arrow { width: auto; margin: 0 0 0 auto; }

/* status */
.statusbar { height: 17px; flex: none; display: flex; align-items: center; justify-content: space-between; padding-left: 2px; background: #f0f0f0; border-top: 1px solid #a6a6a6; font-size: 12px; color: #111; white-space: nowrap; }
.status-num { width: 39px; margin-right: 29px; height: 100%; display: flex; align-items: center; justify-content: center; border: 1px solid #d0d0d0; border-width: 0 1px; font-size: 12.500px; }
.taskline { height: 2px; flex: none; background: #2a4a78; }

/* watermark overlays everything */
.watermark { position: absolute; left: 1671px; top: 53px; width: 204px; height: 204px; pointer-events: none; }
.watermark circle { fill: none; stroke: rgba(255,255,255,.16); stroke-width: 3; }
.wm-band { fill: rgba(255,255,255,.13); }
.watermark .wm-ring { stroke-width: 4; }
.wm-text { font: 52px "Noto Sans CJK SC", sans-serif; fill: rgba(255,255,255,.15); }
```
